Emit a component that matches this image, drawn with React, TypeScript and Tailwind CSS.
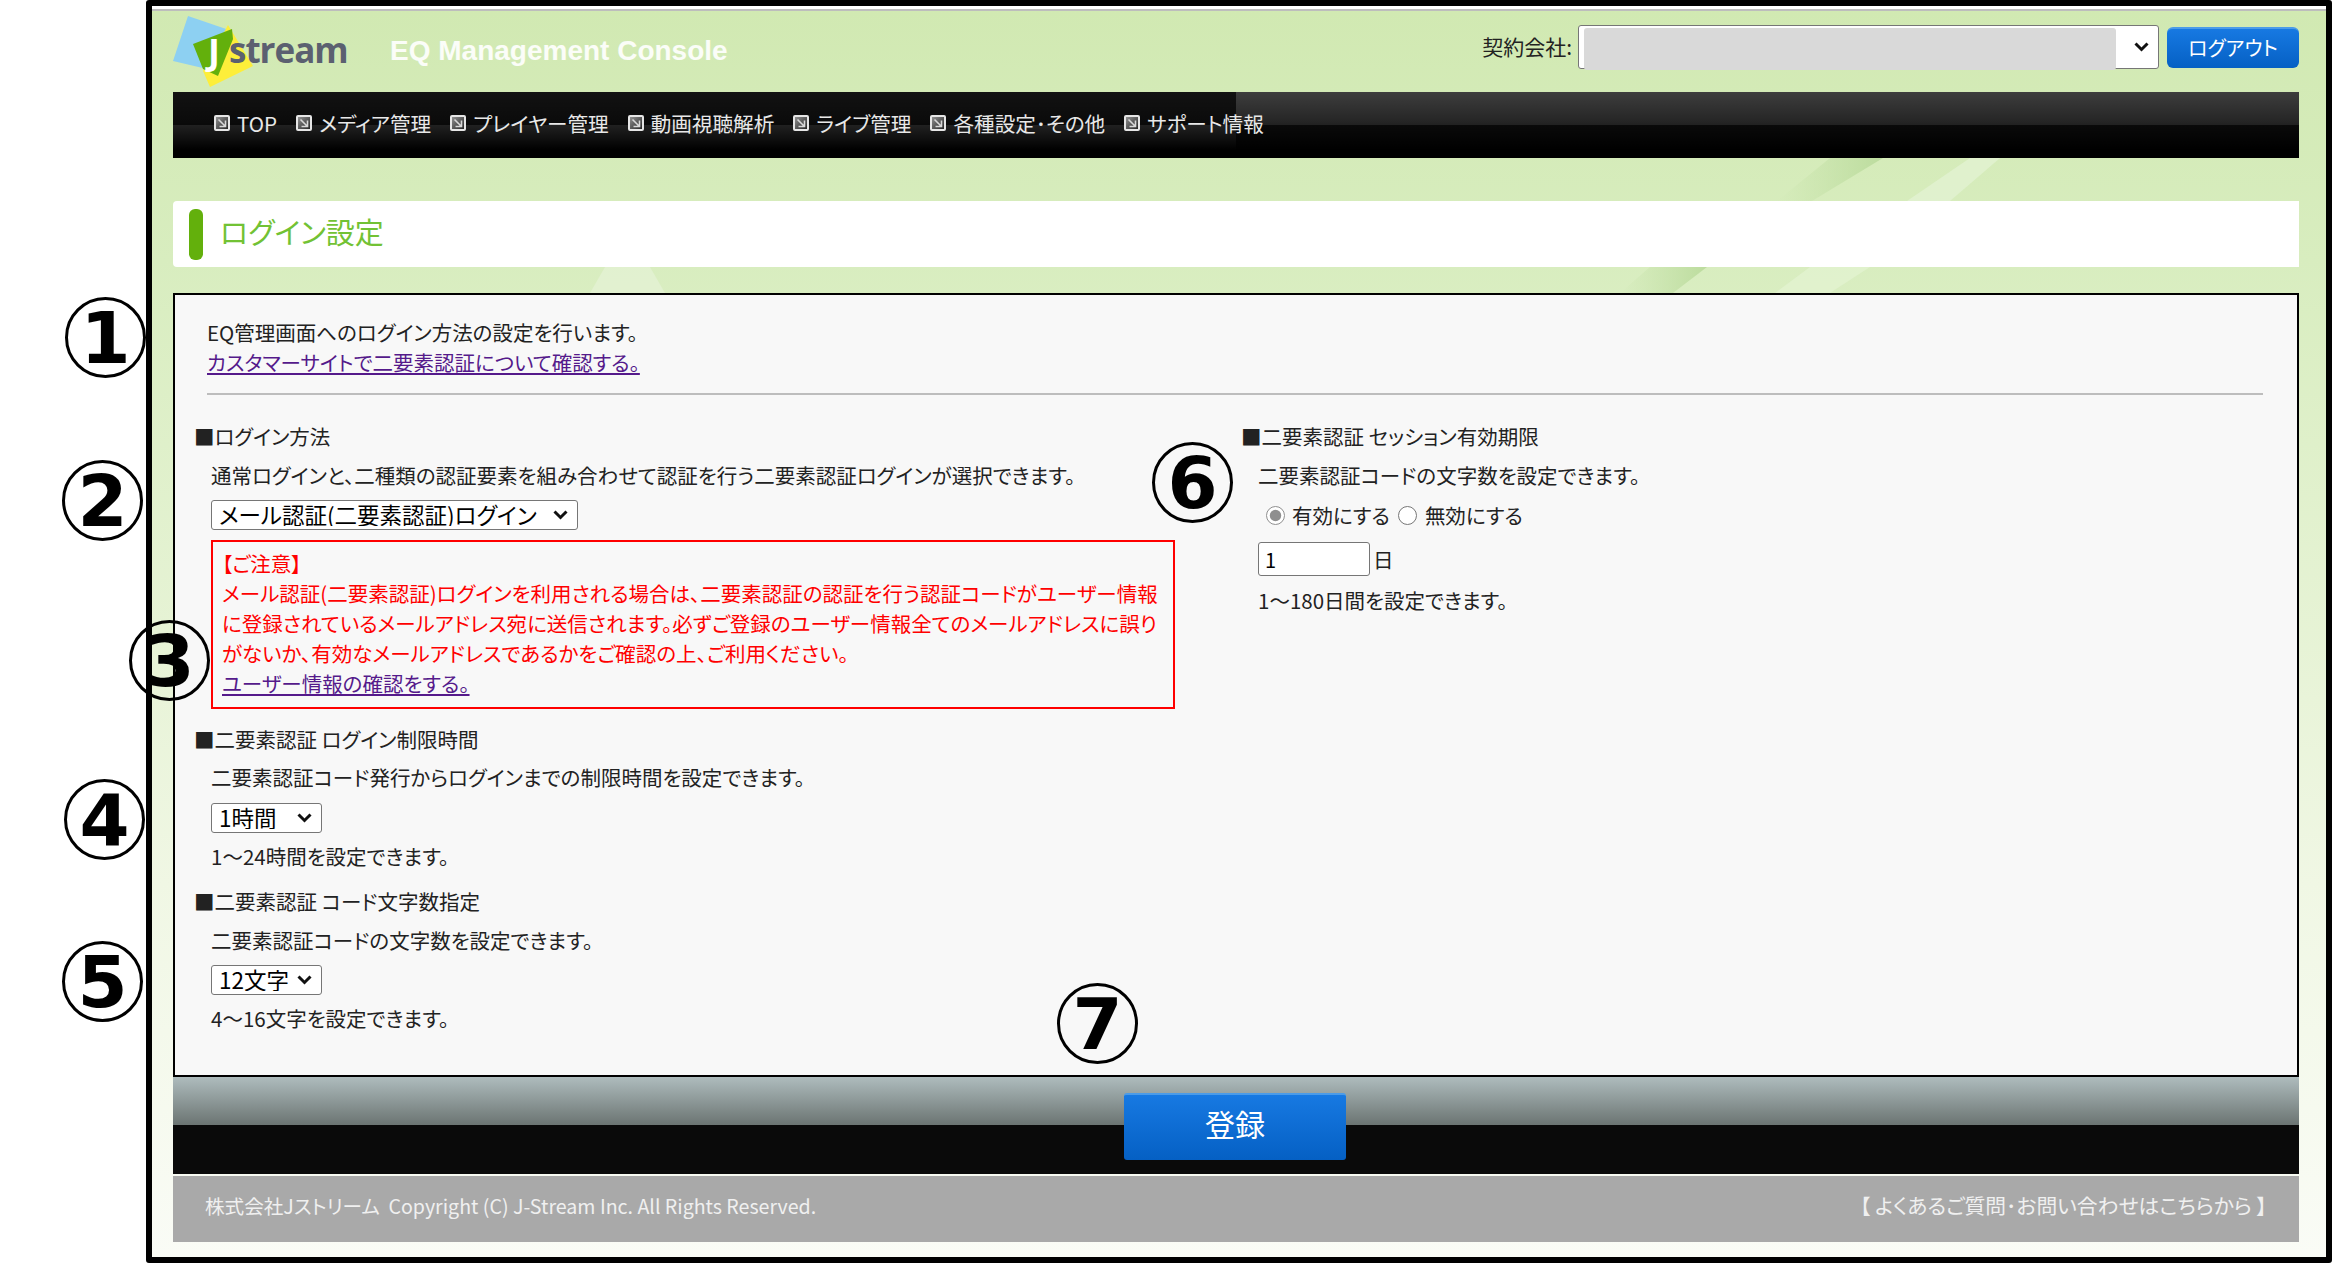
import React from "react";

const navItems = ["TOP", "メディア管理", "プレイヤー管理", "動画視聴解析", "ライブ管理", "各種設定･その他", "サポート情報"];

const NavIcon = () => (
	<svg width="16" height="16" viewBox="0 0 16 16" className="shrink-0">
		<defs>
			<linearGradient id="navIconFill" x1="0" y1="0" x2="1" y2="1">
				<stop offset="0" stopColor="#9a9a9a" />
				<stop offset="1" stopColor="#1c1c1c" />
			</linearGradient>
		</defs>
		<rect x="1" y="1" width="14" height="14" rx="1" fill="url(#navIconFill)" stroke="#e6e6e6" strokeWidth="2" />
		<path d="M4.5 4.5l6.5 6.5M11.5 5.5v6h-6" fill="none" stroke="#d8d8d8" strokeWidth="1.6" />
	</svg>
);

const Logo = () => (
	<div className="relative w-[182px] h-[75px] shrink-0">
		<svg width="90" height="75" viewBox="0 0 90 75" className="absolute left-0 top-0">
			<polygon points="15,1 59,16 34,54 0,46" fill="#8dd0f2" />
			<polygon points="55,10 80,51 37,72 30,56" fill="#fdee3a" />
			<polygon points="20,29 59,14 60,24 45,61 30,54" fill="#63b00c" />
		</svg>
		<span className="absolute left-[35px] top-[12px] text-white font-bold text-[36px] leading-[50px] font-['Open_Sans',sans-serif]">J</span>
		<span className="absolute left-[56px] top-[10px] text-[#5b6070] font-bold text-[35px] leading-[50px] tracking-[-1px] font-['Open_Sans',sans-serif]">stream</span>
	</div>
);

const Circled = ({ className, n }: { className: string; n: string }) => (
	<div className={"absolute w-[81px] h-[81px] rounded-full border-[3px] border-black flex items-center justify-center text-black font-bold text-[72px] leading-none font-['DejaVu_Sans',sans-serif] " + className}>
		{n}
	</div>
);

const Heading = ({ children }: { children: React.ReactNode }) => (
	<div className="h-[30px] leading-[28px] -ml-[17px]">■{children}</div>
);

const Line = ({ children, className }: { children: React.ReactNode; className?: string }) => (
	<div className={"h-[30px] leading-[28px] " + (className ?? "")}>{children}</div>
);

const Select = ({ className, children }: { className: string; children?: React.ReactNode }) => (
	<div className={"relative " + className}>
		<select className="block appearance-none w-full h-full border border-[#767676] rounded-[3px] bg-white text-black text-[22.5px] leading-[26px] pl-[7px] pb-[3px]">
			{children}
		</select>
		<svg width="15" height="10" viewBox="0 0 15 10" className="absolute right-[10px] top-1/2 -translate-y-1/2 pointer-events-none">
			<path d="M1.5 1.5l6 6 6-6" fill="none" stroke="#111" strokeWidth="3" />
		</svg>
	</div>
);

const App = () => {
	return (
		<div className="relative w-[2332px] h-[1263px] overflow-hidden bg-white pl-[146px] font-['Noto_Sans_CJK_JP',sans-serif] [font-feature-settings:'palt'] text-[20.5px] text-[#222]">
			<div className="h-full flex flex-col border-[6px] border-black rounded-[3px] bg-white">
				<div className="h-[5px] shrink-0 bg-white border-b-2 border-[#bdbdbd]" />
				<div className="relative flex-1 flex flex-col pl-[21px] pr-[27px] bg-[linear-gradient(to_bottom,#d1e9b2_0%,#d8edbf_20%,#f0f7e4_70%,#fafcf6_100%)]">
					{/* diagonal streaks in the page background */}
					<svg width="2175" height="300" viewBox="152 11 2175 300" className="absolute left-0 top-0 pointer-events-none">
						<defs>
							<linearGradient id="streakDark" x1="0" y1="0" x2="1" y2="0">
								<stop offset="0" stopColor="#c3e0a6" stopOpacity="0" />
								<stop offset="1" stopColor="#bcdc9e" />
							</linearGradient>
						</defs>
						<polygon points="1777,201 1812,201 1883,158 1830,158" fill="url(#streakDark)" />
						<polygon points="1907,201 1950,201 2000,158 1970,158" fill="#e2f2d2" fillOpacity="0.8" />
						<polygon points="1620,293 1673,293 1707,267 1650,267" fill="url(#streakDark)" />
						<polygon points="1775,293 1830,293 1870,267 1810,267" fill="#e2f2d0" fillOpacity="0.8" />
						<polygon points="590,293 665,293 650,267 605,267" fill="#e3f1d3" fillOpacity="0.8" />
					</svg>

					<header className="relative h-[81px] shrink-0 flex items-start">
						<div className="mt-[4px]">
							<Logo />
						</div>
						<div className="ml-[35px] mt-[23px] text-white/90 font-bold text-[28px] leading-[34px] font-['Liberation_Sans',sans-serif]">
							EQ Management Console
						</div>
						<div className="ml-auto mt-[14px] flex items-center">
							<span className="mr-[6px] text-[21px] text-[#222]">契約会社:</span>
							<div className="relative">
								<Select className="w-[581px] h-[44px]" />
								<div className="absolute left-[6px] top-[3px] w-[532px] h-[42px] rounded-[3px] bg-[#d9d9d9]" />
							</div>
							<button className="ml-[8px] w-[132px] h-[41px] rounded-[6px] border-t-2 border-[#4b9be8] bg-[linear-gradient(to_bottom,#1779e2,#0560c4)] text-white text-[20px]">
								ログアウト
							</button>
						</div>
					</header>

					<nav className="relative h-[66px] shrink-0 flex items-center pl-[41px] pb-[4px] gap-[19px] [background:linear-gradient(to_bottom,rgba(0,0,0,0.1)_0%,rgba(0,0,0,0.45)_45%,rgba(0,0,0,1)_88%),repeating-conic-gradient(#444_0_25%,#141414_0_50%)] bg-[length:100%_100%,4px_4px]">
						{navItems.map((item) => (
							<a key={item} className="flex items-center gap-[7px] text-[#e8e8e8] text-[20.6px] leading-none">
								<NavIcon />
								{item}
							</a>
						))}
					</nav>

					<div className="relative mt-[43px] h-[66px] shrink-0 flex items-center bg-white rounded-l-[4px] pl-[16px]">
						<div className="w-[14px] h-[51px] rounded-[6px] bg-[#63b00c]" />
						<h1 className="ml-[17px] pb-[5px] text-[#72c234] text-[29px] font-normal">ログイン設定</h1>
					</div>

					<main className="relative mt-[26px] h-[784px] shrink-0 border-2 border-black bg-[#f8f8f8] pt-[22px]">
						<div className="px-[32px]">
							<div className="h-[31px] leading-[31px]">EQ管理画面へのログイン方法の設定を行います。</div>
							<a className="block h-[31px] leading-[29px] text-[#551a8b] underline">カスタマーサイトで二要素認証について確認する。</a>
							<div className="mt-[14px] h-[2px] w-[2056px] bg-[#bdbdbd]" />
						</div>
						<div className="mt-[27px] flex pl-[36px]">
							<div className="w-[1047px]">
								<Heading>ログイン方法</Heading>
								<Line className="mt-[9px]">通常ログインと、二種類の認証要素を組み合わせて認証を行う二要素認証ログインが選択できます。</Line>
								<Select className="mt-[9px] w-[367px] h-[30px]">
									<option>メール認証(二要素認証)ログイン</option>
								</Select>
								<div className="mt-[10px] w-[964px] border-2 border-[#f00] pt-[6px] pb-[9px] pl-[9px] text-[#f00] leading-[30px]">
									<div>【ご注意】</div>
									<div>メール認証(二要素認証)ログインを利用される場合は、二要素認証の認証を行う認証コードがユーザー情報</div>
									<div>に登録されているメールアドレス宛に送信されます。必ずご登録のユーザー情報全てのメールアドレスに誤り</div>
									<div>がないか、有効なメールアドレスであるかをご確認の上、ご利用ください。</div>
									<a className="text-[#551a8b] underline">ユーザー情報の確認をする。</a>
								</div>
								<div className="mt-[16px]">
									<Heading>二要素認証 ログイン制限時間</Heading>
								</div>
								<Line className="mt-[8px]">二要素認証コード発行からログインまでの制限時間を設定できます。</Line>
								<Select className="mt-[10px] w-[111px] h-[30px]">
									<option>1時間</option>
								</Select>
								<Line className="mt-[9px]">1～24時間を設定できます。</Line>
								<div className="mt-[15px]">
									<Heading>二要素認証 コード文字数指定</Heading>
								</div>
								<Line className="mt-[9px]">二要素認証コードの文字数を設定できます。</Line>
								<Select className="mt-[9px] w-[111px] h-[30px]">
									<option>12文字</option>
								</Select>
								<Line className="mt-[9px]">4～16文字を設定できます。</Line>
							</div>
							<div>
								<Heading>二要素認証 セッション有効期限</Heading>
								<Line className="mt-[9px]">二要素認証コードの文字数を設定できます。</Line>
								<div className="mt-[10px] h-[30px] flex items-center pl-[8px] pb-[2px]">
									<input type="radio" name="session" defaultChecked className="w-[19px] h-[19px] m-0 accent-[#8f8f8f]" />
									<span className="ml-[7px]">有効にする</span>
									<input type="radio" name="session" className="ml-[8px] w-[19px] h-[19px] m-0 accent-[#8f8f8f]" />
									<span className="ml-[8px]">無効にする</span>
								</div>
								<div className="mt-[11px] flex items-center">
									<input defaultValue="1" className="w-[112px] h-[34px] border border-[#767676] rounded-[3px] bg-white pl-[6px] text-[20px] text-black" />
									<span className="ml-[3px]">日</span>
								</div>
								<Line className="mt-[10px]">1～180日間を設定できます。</Line>
							</div>
						</div>
					</main>

					<div className="relative h-[97px] shrink-0 flex justify-center pt-[16px] pr-[2px] bg-[linear-gradient(to_bottom,#aebcbd_0%,#6c7573_49%,#0a0a0a_50%,#0a0a0a_100%)]">
						<button className="w-[222px] h-[67px] pb-[8px] rounded-[3px] border-t-2 border-[#4b9be8] bg-[linear-gradient(to_bottom,#1779e2,#0560c4)] text-white text-[30px]">
							登録
						</button>
					</div>
					<div className="relative mt-[2px] h-[66px] shrink-0 flex items-center justify-between px-[32px] pb-[7px] bg-[#a9a9a9] text-[#f0f0f0] text-[19.6px]">
						<span>株式会社Jストリーム&nbsp;&nbsp;Copyright (C) J-Stream Inc. All Rights Reserved.</span>
						<span className="text-[20.8px]">【 よくあるご質問･お問い合わせはこちらから 】</span>
					</div>
					<div className="h-[14px] shrink-0" />
				</div>
			</div>

			<Circled n="1" className="left-[65px] top-[297px]" />
			<Circled n="2" className="left-[62px] top-[460px]" />
			<Circled n="3" className="left-[129px] top-[620px]" />
			<Circled n="4" className="left-[64px] top-[779px]" />
			<Circled n="5" className="left-[62px] top-[941px]" />
			<Circled n="6" className="left-[1152px] top-[442px]" />
			<Circled n="7" className="left-[1057px] top-[983px]" />
		</div>
	);
};

export default App;
